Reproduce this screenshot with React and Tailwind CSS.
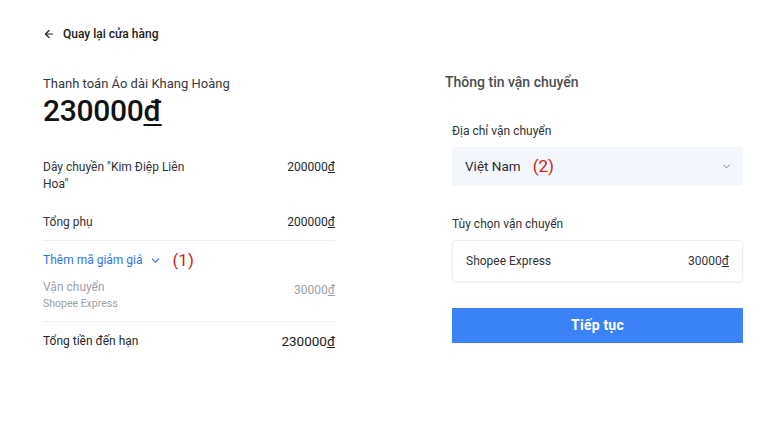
import { ArrowLeft, ChevronDown } from "lucide-react";

const font = { fontFamily: "Roboto, 'Noto Sans', sans-serif" };

function Row({ left, right, className = "" }) {
    return (
        <div className={`flex justify-between items-start ${className}`}>
            {left}
            {right}
        </div>
    );
}

export default function App() {
    return (
        <div className="w-[768px] h-[426px] bg-white text-[#1f2329] flex" style={font}>
            {/* Cột trái */}
            <div className="w-[292px] ml-[43px] pt-[26px]">
                <div className="flex items-center gap-[8px] text-[12px] leading-[16px] font-medium text-[#1a1a1a]">
                    <ArrowLeft size={12} strokeWidth={2.2} />
                    <span>Quay lại cửa hàng</span>
                </div>

                <div className="mt-[33px] text-[13px] text-[#35383c] leading-[18px]">
                    Thanh toán Áo dài Khang Hoàng
                </div>
                <div className="text-[30px] font-medium leading-[36px] tracking-[-0.3px] text-[#111]">
                    230000<span className="underline decoration-2 underline-offset-[3px]">đ</span>
                </div>

                <Row
                    className="mt-[30px]"
                    left={
                        <div className="w-[150px] text-[12px] leading-[17px] text-[#303337]">
                            Dây chuyền "Kim Điệp Liên Hoa"
                        </div>
                    }
                    right={<div className="text-[12px] leading-[17px] text-[#25282c]">200000<span className="underline">đ</span></div>}
                />
                <Row
                    className="mt-[21px] pb-[9px] border-b border-[#eef0f2]"
                    left={<div className="text-[12px] leading-[17px] text-[#303337]">Tổng phụ</div>}
                    right={<div className="text-[12px] leading-[17px] text-[#25282c]">200000<span className="underline">đ</span></div>}
                />

                <div className="mt-[11px] flex items-center text-[12px] leading-[17px] text-[#2f74e0]">
                    <span>Thêm mã giảm giá</span>
                    <ChevronDown size={13} strokeWidth={2} className="ml-[6px]" />
                    <span className="ml-[11px] text-[17px] text-[#d0201c]">(1)</span>
                </div>

                <Row
                    className="mt-[10px] pb-[10px] border-b border-[#eef0f2]"
                    left={
                        <div>
                            <div className="text-[12px] leading-[17px] text-[#9da0a4]">Vận chuyển</div>
                            <div className="text-[10.5px] leading-[15px] text-[#9da0a4]">Shopee Express</div>
                        </div>
                    }
                    right={<div className="mt-[3px] text-[12px] leading-[17px] text-[#9da0a4]">30000<span className="underline">đ</span></div>}
                />

                <Row
                    className="mt-[10px] items-center"
                    left={<div className="text-[12px] leading-[18px] text-[#25282c]">Tổng tiền đến hạn</div>}
                    right={<div className="text-[13.5px] leading-[18px] text-[#1a1d21]">230000<span className="underline">đ</span></div>}
                />
            </div>

            {/* Cột phải */}
            <div className="ml-[110px] w-[298px] pt-[73px]">
                <div className="text-[14px] leading-[18px] font-medium text-[#4a4e53]">
                    Thông tin vận chuyển
                </div>

                <div className="ml-[7px] w-[291px]">
                    <div className="mt-[32px] text-[12px] leading-[16px] text-[#303337]">
                        Địa chỉ vận chuyển
                    </div>
                    <div className="mt-[8px] h-[39px] bg-[#f3f6fa] rounded-[3px] flex items-center px-[13px]">
                        <span className="text-[13.5px] text-[#2a2d31]">Việt Nam</span>
                        <span className="ml-[12px] text-[17px] text-[#d0201c]">(2)</span>
                        <ChevronDown size={11} strokeWidth={2} className="ml-auto mr-[-2px] text-[#707478]" />
                    </div>

                    <div className="mt-[30px] text-[12px] leading-[16px] text-[#303337]">
                        Tùy chọn vận chuyển
                    </div>
                    <div className="mt-[8px] h-[42px] bg-white rounded-[4px] border border-[#eceef1] shadow-[0_1px_3px_rgba(0,0,0,0.06)] flex items-center justify-between px-[13px]">
                        <span className="text-[12px] text-[#303337]">Shopee Express</span>
                        <span className="text-[12px] text-[#303337]">30000<span className="underline">đ</span></span>
                    </div>

                    <button className="mt-[26px] w-full h-[35px] bg-[#3b82f6] text-white text-[14px] font-bold tracking-[0.2px]">
                        Tiếp tục
                    </button>
                </div>
            </div>
        </div>
    );
}
